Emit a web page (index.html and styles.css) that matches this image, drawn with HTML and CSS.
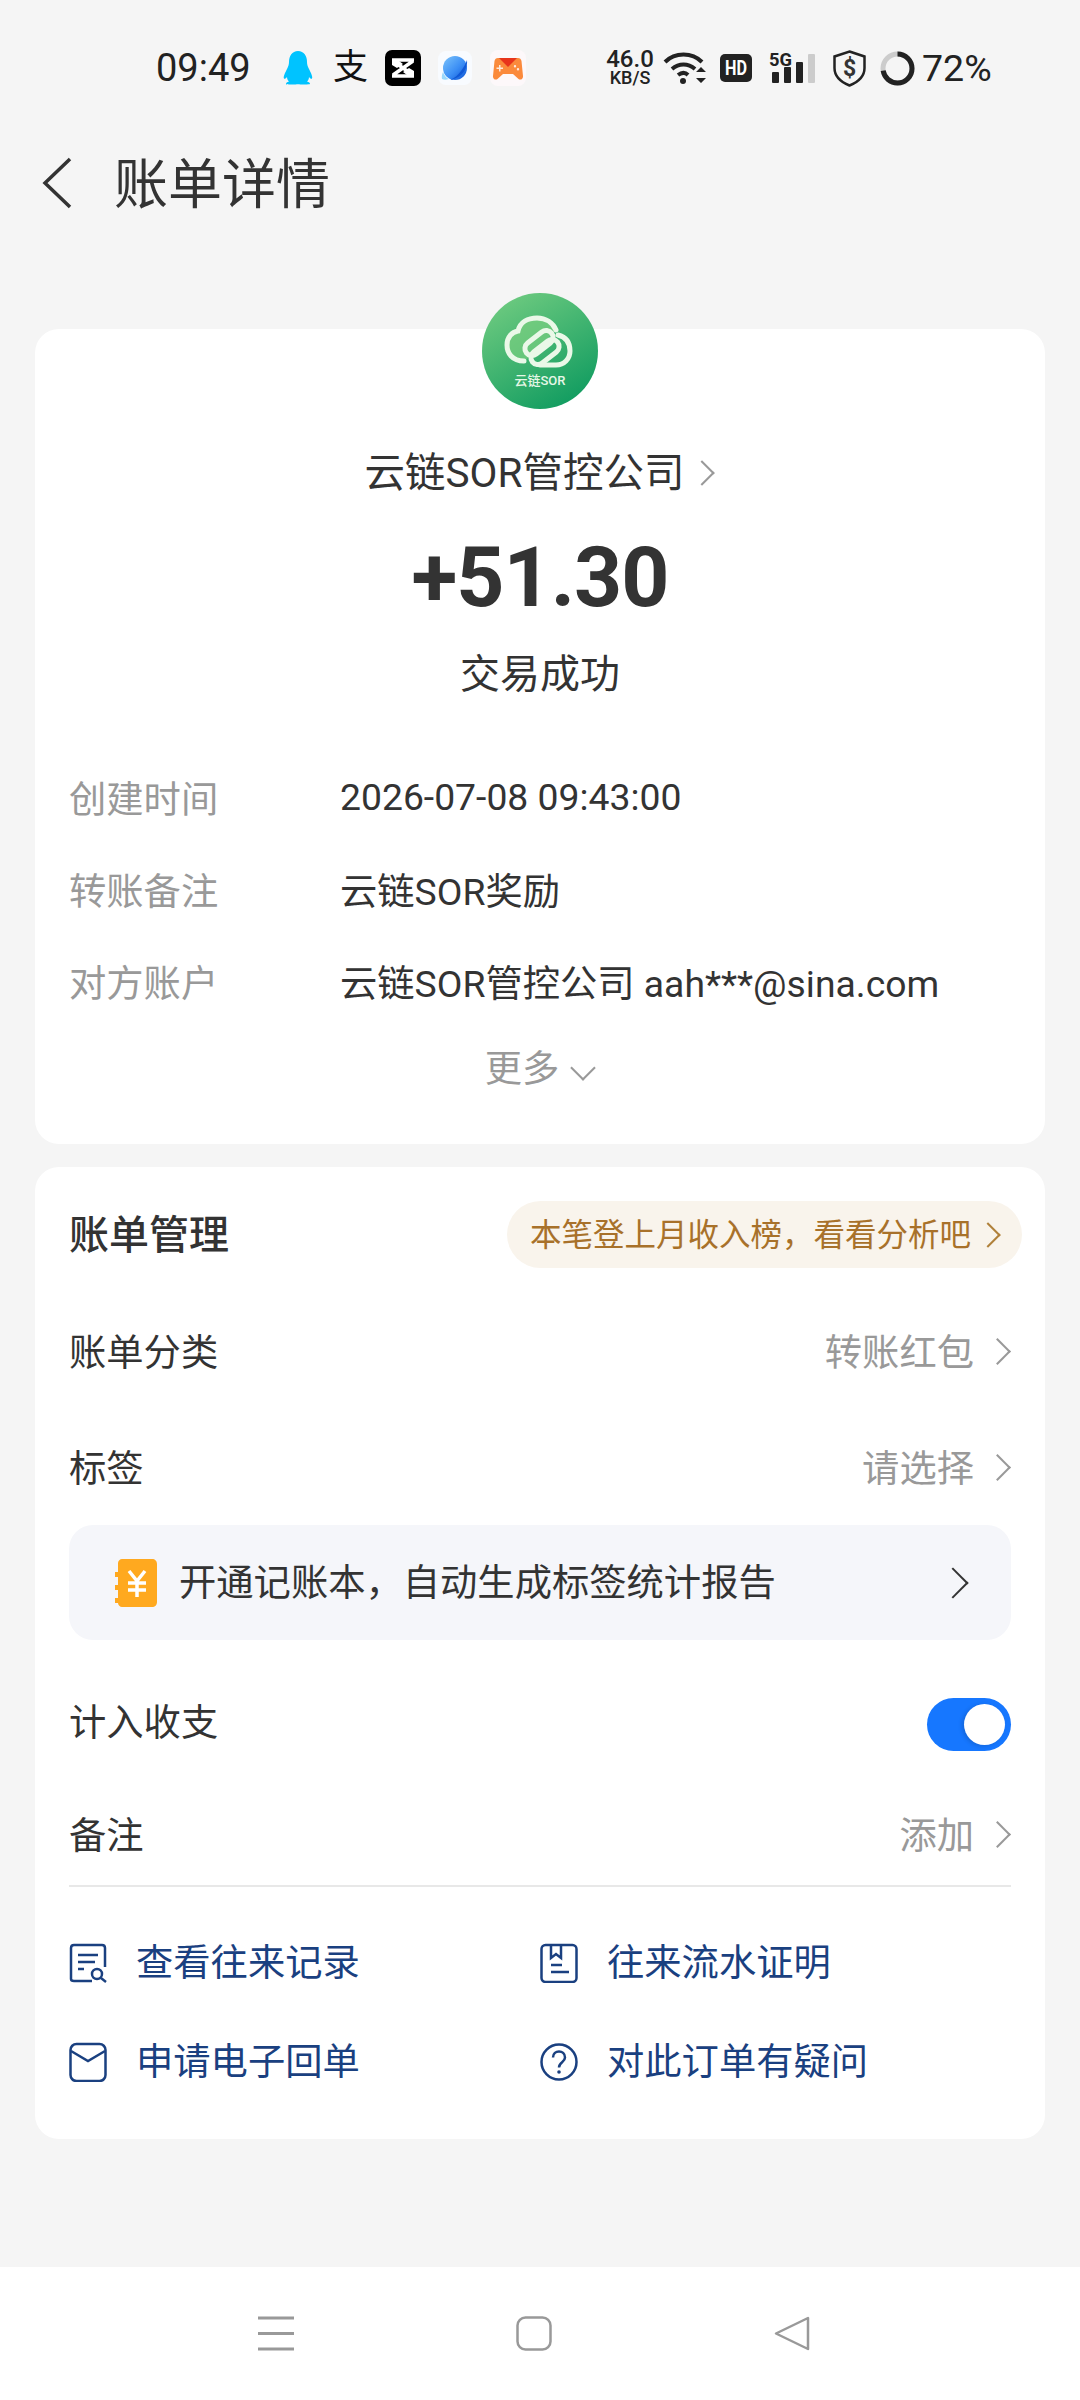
FILE: index.html
```html
<!DOCTYPE html>
<html lang="zh-CN">

<head>
    <meta charset="UTF-8">
    <meta name="viewport" content="width=device-width, initial-scale=1.0">
    <title>账单详情</title>
    <link rel="stylesheet" href="styles.css">
</head>

<body>

    <div class="status">
        <span class="time">09:49</span>
        <svg class="s-qq" width="30" height="34" viewBox="0 0 30 34"><path fill="#00c3ff" d="M15 0c6 0 9 5 9 11 0 2 .5 4 2 7 2 4 4 8 3 9.500-.6.8-2-.2-3-1.500 0 2-1 3.500-2 4.500 2 .6 3 1.500 3 2.200 0 .6-2 .8-6 .8-3 0-4.500-.3-6-.3s-3 .3-6 .3c-4 0-6-.2-6-.8 0-.7 1-1.600 3-2.200-1-1-2-2.500-2-4.500-1 1.300-2.400 2.300-3 1.500-1-1.500 1-5.500 3-9.500 1.500-3 2-5 2-7C6 5 9 0 15 0z"/></svg>
        <span class="s-ali">支</span>
        <svg class="s-cap" width="36" height="36" viewBox="0 0 36 36"><rect width="36" height="36" rx="7" fill="#000"/><path fill="none" stroke="#fff" stroke-width="3.500" d="M7 10h22M7 26h22M8 11l20 14M28 11L8 25"/><path fill="#fff" d="M7 11h7l4 3-6 4-5-3zM29 25h-7l-4-3 6-4 5 3z"/></svg>
        <svg class="s-browser" width="34" height="34" viewBox="0 0 34 34">
            <defs>
                <linearGradient id="planet" x1="0" y1="0" x2="1" y2="1">
                    <stop offset="0" stop-color="#7cc4fb"/>
                    <stop offset="0.550" stop-color="#3b8ef5"/>
                    <stop offset="1" stop-color="#0c52d2"/>
                </linearGradient>
            </defs>
            <rect width="34" height="34" rx="8" fill="#f8fbff"/>
            <circle cx="17" cy="17" r="12" fill="url(#planet)"/>
            <path fill="#0f58d6" d="M29 9c1 7-4 18-17 20 5-2 8-5 11-9 3-4 5-8 6-11z"/>
            <path fill="#9ad8fb" d="M5 21c1 3 3 6 6 7-3 1-5 1-7 0-.5-2 0-5 1-7z"/>
        </svg>
        <svg class="s-game" width="36" height="36" viewBox="0 0 36 36"><rect width="36" height="36" rx="8" fill="#fdf8fa"/><path fill="#fb8a3c" d="M8 8h20c2 0 3 1 3.500 3L33 26c.3 3-2.500 4.500-4.500 3L23 24H13l-5.500 5C5.500 30.500 2.700 29 3 26l1.500-15C5 9 6 8 8 8z"/><path fill="#e8341c" d="M9 8h18l-9 9z"/><path fill="#ffe9dc" d="M9 15h1.500v2.500H13V19h-2.500v2.500H9V19H6.500v-1.500H9zM25 15a1.200 1.200 0 1 1 0 2.400 1.200 1.200 0 0 1 0-2.400zM28 18a1.200 1.200 0 1 1 0 2.400 1.200 1.200 0 0 1 0-2.400z"/></svg>
        <span class="s-speed"><b>46.0</b><i>KB/S</i></span>
        <svg class="s-wifi" width="44" height="34" viewBox="0 0 44 34"><g fill="none" stroke="#222" stroke-width="4"><path d="M2 11C12 1 29 1 39 11"/><path d="M9 18c7-6 16-6 23 0"/><path d="M15 24c4-3 7-3 10 0"/></g><circle cx="20" cy="30" r="3" fill="#222"/><path fill="#222" d="M38 16l5 5H33zM38 32l-5-5h10z"/></svg>
        <svg class="s-hd" width="32" height="28" viewBox="0 0 32 28"><rect width="32" height="28" rx="5" fill="#222"/><text x="16" y="21" class="hd-text" text-anchor="middle" textLength="22" lengthAdjust="spacingAndGlyphs">HD</text></svg>
        <svg class="s-signal" width="47" height="40" viewBox="0 -3 47 40"><text x="1" y="15" class="fiveg" textLength="23" lengthAdjust="spacingAndGlyphs">5G</text><rect x="4" y="21" width="7" height="11" rx="1" fill="#222"/><rect x="16" y="16" width="7" height="16" rx="1" fill="#222"/><rect x="28" y="11" width="7" height="21" rx="1" fill="#222"/><rect x="40" y="3" width="7" height="29" rx="1" fill="#ccc"/></svg>
        <svg class="s-shield" width="33" height="37" viewBox="0 0 33 37"><path fill="none" stroke="#222" stroke-width="2.500" d="M16.500 1.500L31.500 6.500V18C31.500 27 24 32.500 16.500 35.500 9 32.500 1.500 27 1.500 18V6.500z"/><text x="16.500" y="26" class="dollar" text-anchor="middle">$</text></svg>
        <svg class="s-ring" width="35" height="35" viewBox="0 0 35 35"><circle cx="17.500" cy="17.500" r="14.500" fill="none" stroke="#ccc" stroke-width="5"/><circle cx="17.500" cy="17.500" r="14.500" fill="none" stroke="#222" stroke-width="5" stroke-dasharray="65.600 91.100" transform="rotate(-90 17.500 17.500)"/></svg>
        <span class="s-batt">72%</span>
    </div>

    <div class="topbar">
        <svg class="back" width="32" height="52" viewBox="0 0 32 52"><path fill="none" stroke="#333" stroke-width="3.500" d="M29 2L4 26l25 24"/></svg>
        <h1>账单详情</h1>
    </div>

    <div class="main">
        <div class="card card-top">
            <svg class="logo" width="116" height="116" viewBox="0 0 116 116">
                <defs>
                    <linearGradient id="logoBg" x1="0.200" y1="0" x2="0.800" y2="1">
                        <stop offset="0" stop-color="#6fcb80"/>
                        <stop offset="1" stop-color="#0d9a5f"/>
                    </linearGradient>
                </defs>
                <circle cx="58" cy="58" r="58" fill="url(#logoBg)"/>
                <path fill="#86d584" fill-opacity=".55" d="M42 68C30 68 25 60 25 52 25 44 30 39 36 38 38 29 46 25 55 25 64 25 71 30 74 37L45 66z"/>
                <g fill="none" stroke="#eaf8e8" stroke-width="5" stroke-linecap="round">
                    <path d="M42 68C30 68 25 60 25 52 25 44 30 39 36 38 38 29 46 25 55 25 64 25 71 30 74 37"/>
                    <path d="M76 42C84 44 88 50 88 58 88 66 82 72 74 72H58"/>
                    <rect x="41" y="43" width="32" height="14" rx="7" transform="rotate(-38 57 50)"/>
                    <rect x="47" y="52" width="32" height="14" rx="7" transform="rotate(-38 63 59)"/>
                </g>
                <text x="58" y="92" class="logo-text" text-anchor="middle">云链SOR</text>
            </svg>
            <div class="payee">云链SOR管控公司<span class="chev chev-name"></span></div>
            <div class="amount">+51.30</div>
            <div class="state">交易成功</div>
            <div class="info">
                <span class="info-k">创建时间</span><span>2026-07-08 09:43:00</span>
                <span class="info-k">转账备注</span><span>云链SOR奖励</span>
                <span class="info-k">对方账户</span><span>云链SOR管控公司 aah***@sina.com</span>
            </div>
            <div class="more">更多<span class="chev-down"></span></div>
        </div>

        <div class="card card-manage">
            <div class="manage-head">
                <h2>账单管理</h2>
                <div class="pill"><span class="pill-text">本笔登上月收入榜，看看分析吧</span><span class="chev chev-pill"></span></div>
            </div>
            <div class="row"><span>账单分类</span><span class="row-val">转账红包<span class="chev"></span></span></div>
            <div class="row"><span>标签</span><span class="row-val">请选择<span class="chev"></span></span></div>
            <div class="banner">
                <svg class="book" width="42" height="48" viewBox="0 0 42 48">
                    <path fill="#ffa91f" d="M7 0h30c3 0 5 2 5 5v38c0 3-2 5-5 5H7c-2 0-4-2-4-4H0v-5h3v-8H0v-5h3v-8H0v-5h3V4c0-2 2-4 4-4z"/>
                    <path fill="none" stroke="#fff" stroke-width="3.500" d="M14 12l8 10 8-10M22 22v16M13 24h18M13 31h18"/>
                </svg>
                <span class="banner-text">开通记账本，自动生成标签统计报告</span>
                <span class="chev chev-dark"></span>
            </div>
            <div class="row row-switch"><span>计入收支</span><span class="switch"><span class="knob"></span></span></div>
            <div class="row row-note"><span>备注</span><span class="row-val">添加<span class="chev"></span></span></div>
            <div class="links">
                <div class="link">
                    <svg width="38" height="40" viewBox="0 0 38 40"><g fill="none" stroke="#1a4080" stroke-width="2.500"><path d="M36 24V5c0-2-1-3-3-3H5C3 2 2 3 2 5v31c0 1 1 2 3 2h18"/><path d="M9 12h20M9 19h17M9 26h6"/><circle cx="28" cy="31" r="5"/><path d="M32 35l5 4"/></g></svg>
                    <span>查看往来记录</span>
                </div>
                <div class="link">
                    <svg width="38" height="40" viewBox="0 0 38 40"><g fill="none" stroke="#1a4080" stroke-width="2.500"><rect x="1.500" y="2" width="35" height="37" rx="4"/><path d="M11 2v13l5-4 5 4V2M11 22h11M11 29h18"/></g></svg>
                    <span>往来流水证明</span>
                </div>
                <div class="link">
                    <svg width="38" height="40" viewBox="0 0 38 40"><g fill="none" stroke="#1a4080" stroke-width="2.500"><rect x="1.500" y="2" width="35" height="37" rx="6"/><path d="M2 9l17 10 17-10"/></g></svg>
                    <span>申请电子回单</span>
                </div>
                <div class="link">
                    <svg width="38" height="40" viewBox="0 0 38 40"><circle cx="19" cy="20" r="17.500" fill="none" stroke="#1a4080" stroke-width="2.500"/><path fill="none" stroke="#1a4080" stroke-width="2.500" d="M13 15.500c0-8 12-8 12 0 0 5-6 4.500-6 10"/><circle cx="19" cy="30" r="1.800" fill="#1a4080"/></svg>
                    <span>对此订单有疑问</span>
                </div>
            </div>
        </div>
    </div>

    <div class="nav">
        <svg width="36" height="35" viewBox="0 0 36 35"><path stroke="#999" stroke-width="3" d="M0 2h36M0 17.500h36M0 33h36"/></svg>
        <svg width="36" height="35" viewBox="0 0 36 35"><rect x="1.500" y="1.500" width="33" height="32" rx="8" fill="none" stroke="#999" stroke-width="2.500"/></svg>
        <svg width="36" height="35" viewBox="0 0 36 35"><path fill="none" stroke="#999" stroke-width="2.500" stroke-linejoin="round" d="M34 2v31L2 17.500z"/></svg>
    </div>

</body>

</html>
```

FILE: styles.css
```css
* {
    box-sizing: border-box;
}

body {
    font-family: Roboto, "Noto Sans CJK SC", sans-serif;
    margin: 0;
    width: 1080px;
    height: 2400px;
    display: flex;
    flex-direction: column;
    background-color: #f5f5f5;
    color: #333;
    font-size: 37.3px;
}

/* status bar */
.status {
    height: 136px;
    display: flex;
    align-items: center;
    padding-left: 156px;
    color: #222;
}

.time {
    width: 94px;
    font-size: 38px;
}

.s-qq { margin-left: 33px; }
.s-cap { margin-left: 16px; }
.s-browser { margin-left: 17px; }
.s-game { margin-left: 18px; }
.s-wifi { margin-left: 8px; }
.s-hd { margin-left: 13px; }
.s-signal { margin-left: 16px; }
.s-shield { margin-left: 18px; }
.s-ring { margin-left: 14px; }

.s-ali {
    margin-left: 20px;
    width: 36px;
    font-size: 35px;
    line-height: 36px;
    color: #111;
}

.s-speed {
    margin-left: 79px;
    width: 50px;
    display: flex;
    flex-direction: column;
    align-items: center;
}

.s-speed b {
    font-size: 24px;
    font-weight: 500;
    line-height: 20px;
}

.s-speed i {
    font-size: 18px;
    font-style: normal;
    font-weight: 500;
    line-height: 18px;
}

.hd-text {
    font-size: 21px;
    font-weight: 700;
    fill: #fff;
}

.fiveg {
    font-size: 18px;
    font-weight: 700;
    fill: #222;
}

.dollar {
    font-size: 23px;
    font-weight: 700;
    fill: #333;
}

.s-batt {
    margin-left: 7px;
    font-size: 37.5px;
}

/* header */
.topbar {
    height: 94px;
    display: flex;
    align-items: center;
    padding-left: 41px;
}

.topbar h1 {
    margin: 0 0 6px 41px;
    font-size: 54px;
    font-weight: 400;
}

.main {
    padding: 99px 35px 0;
}

.card {
    background-color: #fff;
    border-radius: 24px;
}

.card-top {
    height: 815px;
    display: flex;
    flex-direction: column;
    align-items: center;
}

.logo {
    margin-top: -36px;
    flex: none;
}

.logo-text {
    font-size: 13px;
    font-weight: 500;
    fill: #e6f7e6;
}

.payee {
    margin-top: 39px;
    line-height: 50px;
    font-size: 40.5px;
    display: flex;
    align-items: center;
}

.amount {
    margin-top: 30px;
    line-height: 100px;
    font-size: 84px;
    font-weight: 700;
    letter-spacing: -1px;
}

.state {
    margin-top: 22px;
    line-height: 50px;
    font-size: 40px;
}

.info {
    align-self: stretch;
    margin-top: 51px;
    padding-left: 34px;
    display: grid;
    grid-template-columns: 271px 1fr;
    grid-auto-rows: 92px;
    align-items: center;
}

.info-k {
    color: #999;
}

.more {
    margin-top: 17px;
    line-height: 50px;
    padding-right: 3px;
    color: #999;
    display: flex;
    align-items: center;
}

.chev-down {
    width: 18px;
    height: 18px;
    margin: -2px 0 0 15px;
    border-right: 2.5px solid #999;
    border-bottom: 2.5px solid #999;
    transform: rotate(45deg);
}

/* chevrons */
.chev {
    display: inline-block;
    width: 19px;
    height: 19px;
    margin-left: 14px;
    margin-right: 4px;
    border-top: 2.5px solid #999;
    border-right: 2.5px solid #999;
    transform: rotate(45deg);
}

.row-val .chev {
    margin-top: 3px;
}

.chev-name {
    width: 18px;
    height: 18px;
    margin-left: 9px;
}

.chev-pill {
    width: 18px;
    height: 18px;
    margin-left: 8px;
    margin-right: 2px;
    border-color: #b0803a;
}

.chev-dark {
    width: 22px;
    height: 22px;
    margin-left: auto;
    margin-right: 47px;
    border-color: #333;
}

/* bill management card */
.card-manage {
    height: 972px;
    margin-top: 23px;
    padding: 34px 34px 0;
}

.manage-head {
    height: 67px;
    display: flex;
    align-items: center;
    justify-content: space-between;
    margin-right: -11px;
}

.manage-head h2 {
    margin: 0 0 6px;
    font-size: 40px;
    font-weight: 500;
}

.pill {
    height: 67px;
    padding: 0 23px;
    display: flex;
    align-items: center;
    border-radius: 34px;
    background-color: #f9f4ec;
    color: #a8712a;
    font-size: 31.5px;
}

.pill-text {
    margin-bottom: 5px;
}

.row {
    height: 116px;
    padding-bottom: 3px;
    display: flex;
    align-items: center;
    justify-content: space-between;
}

.manage-head + .row {
    margin-top: 25px;
}

.row-val {
    display: flex;
    align-items: center;
    color: #999;
}

.row-switch {
    height: 112px;
    margin-top: 25px;
}

.row-note {
    height: 108px;
    padding-top: 6px;
}

.banner {
    height: 115px;
    padding-left: 46px;
    display: flex;
    align-items: center;
    border-radius: 24px;
    background-color: #f5f6fa;
}

.banner-text {
    margin: 0 0 6px 22px;
}

.book {
    flex: none;
}

.switch {
    width: 84px;
    height: 53px;
    margin-top: 9px;
    padding: 6px;
    display: flex;
    justify-content: flex-end;
    border-radius: 27px;
    background-color: #1677ff;
}

.knob {
    width: 41px;
    height: 41px;
    border-radius: 50%;
    background-color: #fff;
    box-shadow: -2px 1px 4px rgba(0, 0, 0, 0.15);
}

.links {
    padding-top: 26px;
    border-top: 2px solid #e8e8e8;
    display: grid;
    grid-template-columns: 471px 1fr;
    grid-auto-rows: 99px;
    align-items: center;
    color: #1a4080;
}

.link {
    display: flex;
    align-items: center;
    gap: 29px;
}

.link span {
    margin-bottom: 6px;
}

/* bottom navigation */
.nav {
    margin-top: auto;
    height: 133px;
    padding-left: 258px;
    display: flex;
    align-items: center;
    gap: 222px;
    background-color: #fff;
}
```
